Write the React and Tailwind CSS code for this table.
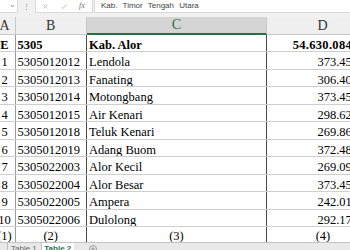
const rows = [
  ['1', '5305012012', 'Lendola', '373.459'],
  ['2', '5305012013', 'Fanating', '306.402'],
  ['3', '5305012014', 'Motongbang', '373.459'],
  ['4', '5305012015', 'Air Kenari', '298.625'],
  ['5', '5305012018', 'Teluk Kenari', '269.863'],
  ['6', '5305012019', 'Adang Buom', '372.481'],
  ['7', '5305022003', 'Alor Kecil', '269.094'],
  ['8', '5305022004', 'Alor Besar', '373.459'],
  ['9', '5305022005', 'Ampera', '242.013'],
  ['10', '5305022006', 'Dulolong', '292.175'],
];

const cell = "shrink-0 h-full flex items-end whitespace-nowrap overflow-hidden";

function Row({ a, b, c, d, bold }) {
  const w = bold ? 'font-bold' : '';
  return (
    <div className={`flex shrink-0 h-[17.5px] border-b border-[#cfcfcf] ${w}`}>
      <div className={`${cell} w-[21px] justify-center border-r border-[#9a9a9a]`}>{a}</div>
      <div className={`${cell} w-[71.5px] pl-[2px] border-r border-[#4a4a4a]`}>{b}</div>
      <div className={`${cell} w-[180px] pl-[2px] border-r border-[#4a4a4a]`}>{c}</div>
      <div className={`${cell} w-[112px] justify-end ${bold ? 'pr-[27px] tracking-[0.3px]' : 'pr-[21px]'}`}>{d}</div>
    </div>
  );
}

function FormulaBar() {
  return (
    <div className="flex shrink-0 h-[17px] items-start bg-[#f1f1f1] font-['Liberation_Sans',sans-serif]">
      <div className="shrink-0 h-[13px] w-[18px] bg-white border-r border-b border-[#d9d9d9] flex items-center justify-end pr-[3px]">
        <svg width="3" height="2" viewBox="0 0 3 2"><path d="M0 0.5 L1.5 1.5 L3 0.5" stroke="#666" strokeWidth="0.8" fill="none" /></svg>
      </div>
      <div className="shrink-0 w-[17px] h-[13px] flex flex-col items-center justify-center gap-[1.5px]">
        <span className="w-[1px] h-[1px] bg-[#999]" />
        <span className="w-[1px] h-[1px] bg-[#999]" />
        <span className="w-[1px] h-[1px] bg-[#999]" />
      </div>
      <div className="shrink-0 h-[13px] w-[58px] bg-white border-l border-r border-b border-[#d9d9d9] flex items-center">
        <svg className="ml-[7px]" width="5" height="5" viewBox="0 0 5 5"><path d="M0.5 0.5 L4.5 4.5 M4.5 0.5 L0.5 4.5" stroke="#b4b4b4" strokeWidth="0.8" /></svg>
        <svg className="ml-[13px]" width="6" height="5" viewBox="0 0 6 5"><path d="M0.5 2.8 L2.1 4.4 L5.5 0.6" stroke="#b4b4b4" strokeWidth="0.8" fill="none" /></svg>
        <span className="ml-[12px] font-['Liberation_Serif',serif] italic text-[8px] text-[#707070] leading-none">fx</span>
      </div>
      <div className="h-[13px] flex-1 ml-[1px] bg-white border-l border-b border-[#d9d9d9] flex items-center pl-[6px] text-[8px] text-[#444] whitespace-nowrap [word-spacing:3px]">
        Kab. Timor Tengah Utara
      </div>
    </div>
  );
}

function Header() {
  const h = "shrink-0 h-full flex items-end justify-center pb-[1px] border-r border-[#c8c8c8]";
  return (
    <div className="flex shrink-0 h-[17.5px] bg-[#efefef] text-[14px] text-[#333] leading-none">
      <div className={`${h} w-[21px] border-b border-[#c8c8c8]`}>A</div>
      <div className={`${h} w-[71.5px] border-b border-[#c8c8c8]`}>B</div>
      <div className={`${h} w-[180px] bg-[#d5d5d5] text-[#217346] border-b-2 border-b-[#217346]`}>C</div>
      <div className={`${h} w-[112px] border-b border-[#c8c8c8]`}>D</div>
    </div>
  );
}

function TabBar() {
  return (
    <div className="flex-1 min-h-0 overflow-hidden flex items-start bg-[#e9e9e9] border-t border-[#c4c4c4] font-['Liberation_Sans',sans-serif] text-[8px] leading-none">
      <div className="ml-[7px] h-full border-l border-[#bdbdbd] pl-[3px] pr-[4px] pt-[2px] text-[#666]">Table 1</div>
      <div className="h-full w-[33px] bg-white border-l border-[#bdbdbd] pt-[2px] flex justify-center font-bold text-[#217346]">Table 2</div>
      <svg className="ml-[15px] mt-[2px]" width="8" height="8" viewBox="0 0 8 8">
        <circle cx="4" cy="4" r="3.5" stroke="#8a8a8a" strokeWidth="0.8" fill="none" />
        <path d="M4 2 V6 M2 4 H6" stroke="#8a8a8a" strokeWidth="0.8" />
      </svg>
    </div>
  );
}

export default function App() {
  return (
    <div className="w-[350px] h-[250px] overflow-hidden bg-white flex flex-col">
      <FormulaBar />
      <div className="shrink-0 ml-[-5.5px] font-['Liberation_Serif',serif] text-[12.5px] text-black leading-none">
        <Header />
        <Row a="E" b="5305" c="Kab. Alor" d="54.630.084" bold />
        {rows.map((r) => (
          <Row key={r[0]} a={r[0]} b={r[1]} c={r[2]} d={r[3]} />
        ))}
        <div className="flex shrink-0 h-[15px]">
          <div className={`${cell} w-[21px] justify-center border-r border-[#9a9a9a]`}>(1)</div>
          <div className={`${cell} w-[71.5px] justify-center border-r border-[#4a4a4a]`}>(2)</div>
          <div className={`${cell} w-[180px] justify-center border-r border-[#4a4a4a]`}>(3)</div>
          <div className={`${cell} w-[112px] justify-center`}>(4)</div>
        </div>
      </div>
      <TabBar />
    </div>
  );
}
